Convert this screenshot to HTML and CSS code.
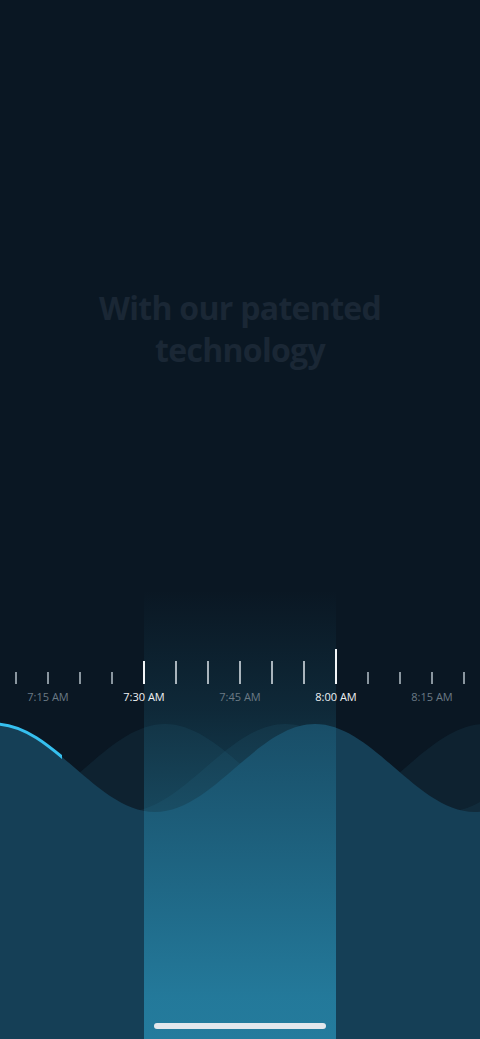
FILE: index.html
```html
<!DOCTYPE html>
<html lang="en">
<head>
<meta charset="utf-8">
<title>Sleep timeline</title>
<link rel="stylesheet" href="styles.css">
</head>
<body>
<div class="screen">
  <h1 class="headline">With our patented<br>technology</h1>

  <div class="chart">
    <div class="ruler">
      <span class="tick"></span>
      <span class="tick"></span>
      <span class="tick"></span>
      <span class="tick"></span>
      <span class="tick tick-mark"></span>
      <span class="tick tick-in"></span>
      <span class="tick tick-in"></span>
      <span class="tick tick-in"></span>
      <span class="tick tick-in"></span>
      <span class="tick tick-in"></span>
      <span class="tick tick-major"></span>
      <span class="tick"></span>
      <span class="tick"></span>
      <span class="tick"></span>
      <span class="tick"></span>
    </div>
    <div class="labels">
      <span class="label">7:15 AM</span>
      <span class="label label-on">7:30 AM</span>
      <span class="label">7:45 AM</span>
      <span class="label label-on">8:00 AM</span>
      <span class="label">8:15 AM</span>
    </div>
    <svg class="waves" viewBox="0 0 480 327" width="480" height="327" preserveAspectRatio="none">
      <defs>
        <clipPath id="arcClip"><rect x="0" y="0" width="62" height="60"/></clipPath>
      </defs>
      <path class="ghost" d="M -155 12 C -97 12 -53 100 5 100 C 63 100 107 12 165 12 C 223 12 267 100 325 100 C 383 100 427 12 485 12 C 543 12 587 100 645 100 L 645 327 L -155 327 Z"/>
      <path class="ghost" d="M -195 100 C -137 100 -93 12 -35 12 C 23 12 67 100 125 100 C 183 100 227 12 285 12 C 343 12 387 100 445 100 C 503 100 547 12 605 12 L 605 327 L -195 327 Z"/>
      <path class="main" d="M -165 100 C -107 100 -63 12 -5 12 C 53 12 97 100 155 100 C 213 100 257 12 315 12 C 373 12 417 100 475 100 C 533 100 577 12 635 12 L 635 327 L -165 327 Z"/>
      <path class="arc" clip-path="url(#arcClip)" d="M -165 100 C -107 100 -63 12 -5 12 C 53 12 97 100 155 100"/>
    </svg>
  </div>

  <div class="spotlight"></div>
  <div class="home-indicator"></div>
</div>
</body>
</html>
```

FILE: styles.css
```css
html, body {
  margin: 0;
  padding: 0;
  background: #0a1723;
}

.screen {
  position: relative;
  width: 480px;
  height: 1039px;
  overflow: hidden;
  display: flex;
  flex-direction: column;
  font-family: "Open Sans", "Liberation Sans", sans-serif;
}

.headline {
  margin: 0;
  padding-top: 287px;
  text-align: center;
  font-size: 32px;
  line-height: 42px;
  font-weight: 700;
  color: #1a2735;
  letter-spacing: -0.7px;
}

.chart {
  margin-top: auto;
  display: flex;
  flex-direction: column;
}

.ruler {
  position: relative;
  z-index: 2;
  display: flex;
  height: 35px;
  align-items: flex-end;
}

.tick {
  flex: 0 0 32px;
  display: flex;
  justify-content: center;
  height: 12px;
}

.tick::before {
  content: "";
  width: 1.4px;
  height: 100%;
  background: #8a969f;
}

.tick-in { height: 23px; }
.tick-in::before { background: #a9b4bc; }

.tick-mark { height: 23px; }
.tick-mark::before { background: #f2f5f7; }

.tick-major { height: 35px; }
.tick-major::before { background: #f2f5f7; }

.labels {
  position: relative;
  z-index: 2;
  display: flex;
  margin-top: 6px;
  height: 14px;
}

.label {
  flex: 0 0 96px;
  text-align: center;
  font-size: 11px;
  line-height: 14px;
  color: #6b7a85;
}

.label-on {
  color: #eef1f3;
  font-weight: 500;
}

.waves {
  display: block;
  margin-top: 8px;
  width: 480px;
  height: 327px;
}

.ghost {
  fill: rgba(40, 100, 130, 0.15);
}

.main {
  fill: #153f56;
}

.arc {
  fill: none;
  stroke: #36c0ef;
  stroke-width: 3;
}

.spotlight {
  position: absolute;
  left: 144px;
  width: 192px;
  top: 590px;
  bottom: 0;
  z-index: 1;
  background: linear-gradient(
    to bottom,
    rgba(45, 160, 200, 0) 0%,
    rgba(45, 160, 200, 0.13) 26.7%,
    rgba(45, 160, 200, 0.32) 53.5%,
    rgba(45, 160, 200, 0.6) 91%,
    rgba(45, 160, 200, 0.62) 100%
  );
}

.home-indicator {
  position: absolute;
  z-index: 3;
  left: 154px;
  width: 172px;
  top: 1023px;
  height: 6px;
  border-radius: 3px;
  background: #e3e7ec;
}
```
